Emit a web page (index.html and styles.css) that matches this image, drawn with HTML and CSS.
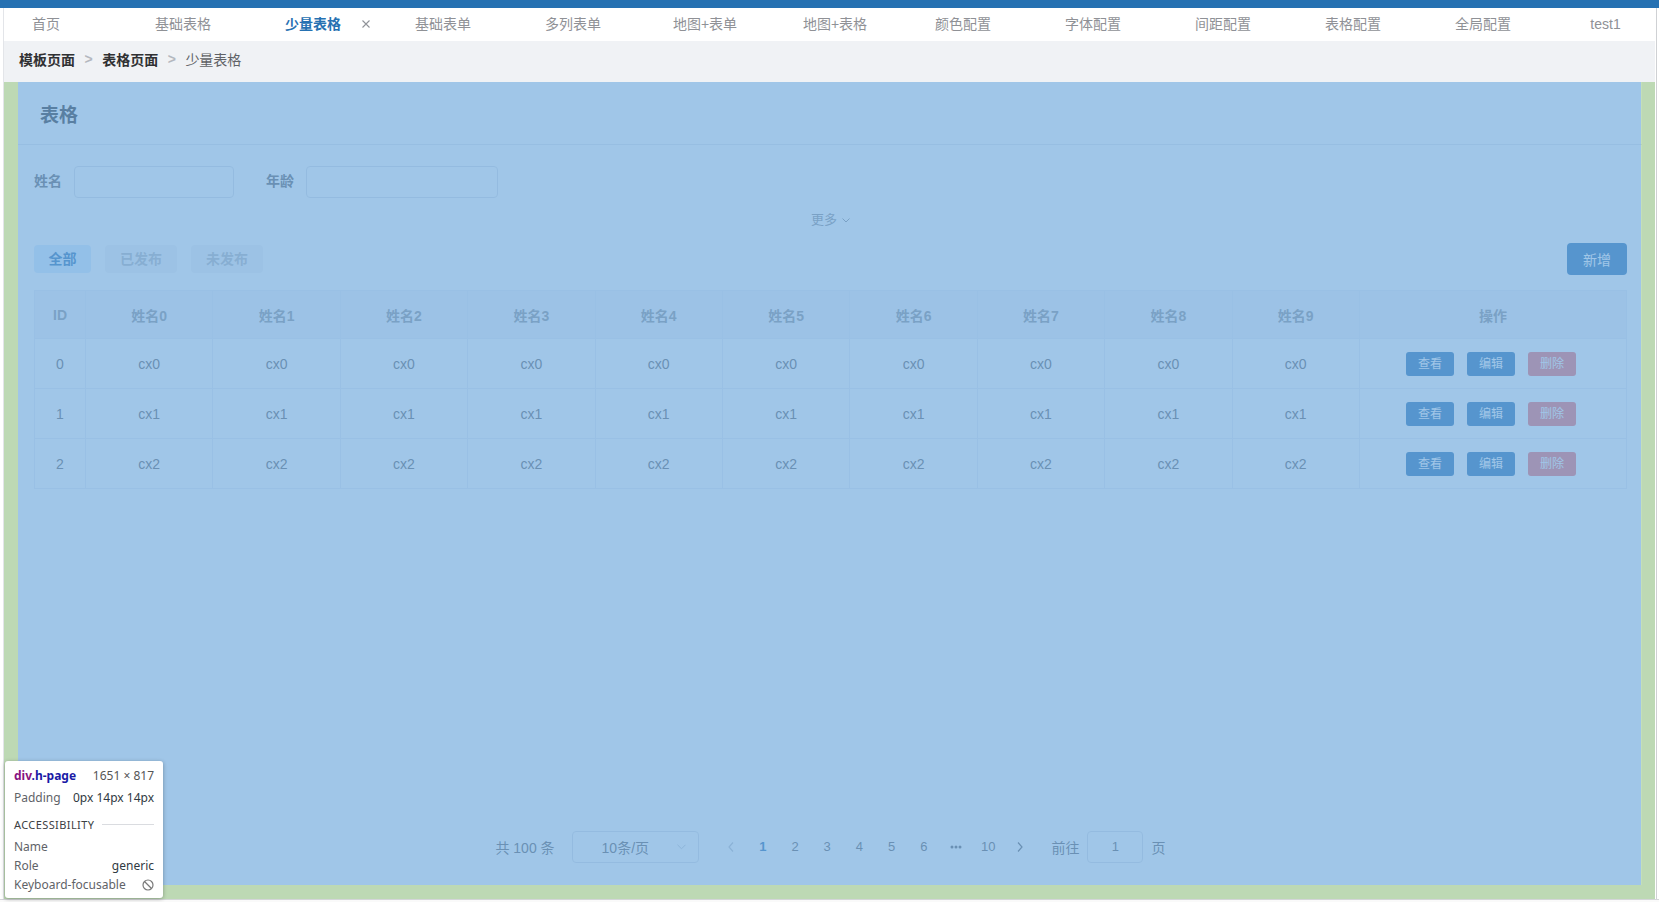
FILE: index.html
```html
<!DOCTYPE html>
<html lang="zh-CN">
<head>
<meta charset="utf-8">
<title>少量表格</title>
<link rel="stylesheet" href="styles.css">
</head>
<body>
<div class="topbar"></div>
<div class="app">
  <div class="gutter-left"></div>
  <div class="main">
    <nav class="tabs">
      <div class="tab tab-first">首页</div>
      <div class="tab">基础表格</div>
      <div class="tab tab-active"><span class="tab-label">少量表格<svg class="tab-close" viewBox="0 0 8 8"><path d="M0.5 0.5L7.5 7.5M7.5 0.5L0.5 7.5" stroke="#909399" stroke-width="1.1" fill="none"/></svg></span></div>
      <div class="tab">基础表单</div>
      <div class="tab">多列表单</div>
      <div class="tab tab-nudge">地图+表单</div>
      <div class="tab tab-nudge">地图+表格</div>
      <div class="tab">颜色配置</div>
      <div class="tab">字体配置</div>
      <div class="tab">间距配置</div>
      <div class="tab">表格配置</div>
      <div class="tab">全局配置</div>
      <div class="tab tab-last">test1</div>
    </nav>
    <div class="breadcrumb">
      <span class="crumb crumb-strong">模板页面</span><span class="sep">&gt;</span><span class="crumb crumb-strong">表格页面</span><span class="sep">&gt;</span><span class="crumb">少量表格</span>
    </div>
    <div class="h-page">
      <section class="card">
        <header class="card-header"><h2 class="card-title">表格</h2></header>
        <div class="card-body">
          <form class="filters">
            <label class="field-label">姓名</label>
            <span class="input input-name"></span>
            <label class="field-label field-gap">年龄</label>
            <span class="input input-age"></span>
          </form>
          <div class="more">更多<svg class="more-icon" viewBox="0 0 8 5"><path d="M0.5 0.5L4 4L7.5 0.5" stroke="#909399" stroke-width="1" fill="none"/></svg></div>
          <div class="toolbar">
            <div class="status-tabs">
              <span class="status status-on">全部</span>
              <span class="status">已发布</span>
              <span class="status">未发布</span>
            </div>
            <button class="btn btn-add" type="button">新增</button>
          </div>
          <table class="grid">
            <colgroup>
              <col class="c-id"><col class="c-n"><col class="c-n"><col class="c-n"><col class="c-n"><col class="c-n"><col class="c-n"><col class="c-n"><col class="c-n"><col class="c-n"><col class="c-n"><col class="c-op">
            </colgroup>
            <thead>
              <tr><th>ID</th><th>姓名0</th><th>姓名1</th><th>姓名2</th><th>姓名3</th><th>姓名4</th><th>姓名5</th><th>姓名6</th><th>姓名7</th><th>姓名8</th><th>姓名9</th><th>操作</th></tr>
            </thead>
            <tbody>
              <tr><td>0</td><td>cx0</td><td>cx0</td><td>cx0</td><td>cx0</td><td>cx0</td><td>cx0</td><td>cx0</td><td>cx0</td><td>cx0</td><td>cx0</td><td class="ops"><div class="op-group"><span class="op op-blue">查看</span><span class="op op-blue">编辑</span><span class="op op-red">删除</span></div></td></tr>
              <tr><td>1</td><td>cx1</td><td>cx1</td><td>cx1</td><td>cx1</td><td>cx1</td><td>cx1</td><td>cx1</td><td>cx1</td><td>cx1</td><td>cx1</td><td class="ops"><div class="op-group"><span class="op op-blue">查看</span><span class="op op-blue">编辑</span><span class="op op-red">删除</span></div></td></tr>
              <tr><td>2</td><td>cx2</td><td>cx2</td><td>cx2</td><td>cx2</td><td>cx2</td><td>cx2</td><td>cx2</td><td>cx2</td><td>cx2</td><td>cx2</td><td class="ops"><div class="op-group"><span class="op op-blue">查看</span><span class="op op-blue">编辑</span><span class="op op-red">删除</span></div></td></tr>
            </tbody>
          </table>
          <div class="pager">
            <span class="pager-total">共 100 条</span>
            <span class="pager-size">10条/页<svg class="pager-caret" viewBox="0 0 10 6"><path d="M0.5 0.5L5 5L9.5 0.5" stroke="#c0c4cc" stroke-width="1" fill="none"/></svg></span>
            <span class="pg"><svg class="pg-arrow" viewBox="0 0 6 10"><path d="M5 0.5L1 5L5 9.5" stroke="#c0c4cc" stroke-width="1.2" fill="none"/></svg></span>
            <span class="pg pg-on">1</span>
            <span class="pg">2</span>
            <span class="pg">3</span>
            <span class="pg">4</span>
            <span class="pg">5</span>
            <span class="pg">6</span>
            <span class="pg"><svg class="pg-dots" viewBox="0 0 12 4"><circle cx="2" cy="2" r="1.5" fill="#606266"/><circle cx="6" cy="2" r="1.5" fill="#606266"/><circle cx="10" cy="2" r="1.5" fill="#606266"/></svg></span>
            <span class="pg">10</span>
            <span class="pg"><svg class="pg-arrow" viewBox="0 0 6 10"><path d="M1 0.5L5 5L1 9.5" stroke="#606266" stroke-width="1.2" fill="none"/></svg></span>
            <span class="pager-jump">前往</span>
            <span class="pager-input">1</span>
            <span class="pager-unit">页</span>
          </div>
        </div>
      </section>
      <div class="hl"></div>
      <div class="inspect">
        <div class="ins-row">
          <span class="ins-name"><span class="ins-tag">div</span><span class="ins-cls">.h-page</span></span>
          <span class="ins-dim">1651 × 817</span>
        </div>
        <div class="ins-row ins-row-pad">
          <span class="ins-key">Padding</span>
          <span class="ins-val">0px 14px 14px</span>
        </div>
        <div class="ins-section"><span>ACCESSIBILITY</span><span class="ins-rule"></span></div>
        <div class="ins-row ins-row-tall ins-row-a"><span class="ins-key">Name</span><span class="ins-val"></span></div>
        <div class="ins-row ins-row-tall"><span class="ins-key">Role</span><span class="ins-val">generic</span></div>
        <div class="ins-row ins-row-tall"><span class="ins-key">Keyboard-focusable</span><svg class="ins-no" viewBox="0 0 12 12"><circle cx="6" cy="6" r="5" stroke="#7a7a7a" stroke-width="1.2" fill="none"/><path d="M2.5 2.5L9.5 9.5" stroke="#7a7a7a" stroke-width="1.2"/></svg></div>
      </div>
    </div>
  </div>
  <div class="gutter-right"></div>
</div>
<div class="bottom-strip"></div>
</body>
</html>
```
FILE: styles.css
```css
html, body {
  margin: 0;
  padding: 0;
}
body {
  width: 1659px;
  height: 902px;
  overflow: hidden;
  background: #ffffff;
  font-family: "Liberation Sans", "Noto Sans CJK SC", sans-serif;
  font-size: 14px;
  color: #606266;
}
.topbar {
  height: 8px;
  background: #2671b2;
}
.app {
  display: flex;
  height: 891px;
}
.gutter-left {
  width: 4px;
  flex: 0 0 4px;
}
.gutter-right {
  width: 4px;
  flex: 0 0 4px;
  box-shadow: inset -2px 0 0 #ffffff, inset -3px 0 0 #cfd1d4;
}
.main {
  width: 1651px;
  flex: 0 0 1651px;
  display: flex;
  flex-direction: column;
  box-shadow: -1px 0 0 #e3e5e9;
}
.bottom-strip {
  height: 4px;
  box-sizing: border-box;
  border-top: 1px solid #d4d6d9;
  background: #fafafa;
}

/* tabs */
.tabs {
  height: 33px;
  display: flex;
  background: #ffffff;
  overflow: hidden;
  white-space: nowrap;
  font-size: 14px;
  line-height: 33px;
  color: #8f9196;
}
.tab {
  flex: 0 0 130px;
  text-align: center;
  box-sizing: border-box;
}
.tab-nudge {
  padding-left: 4px;
}
.tab-first {
  flex-basis: 114px;
  text-align: left;
  padding-left: 28px;
}
.tab-last {
  flex-basis: 107px;
  padding-left: 8px;
}
.tab-active {
  color: #2671b2;
  font-weight: bold;
}
.tab-label {
  position: relative;
}
.tab-close {
  position: absolute;
  left: calc(100% + 21px);
  top: 50%;
  margin-top: -4px;
  width: 8px;
  height: 8px;
}

/* breadcrumb */
.breadcrumb {
  height: 41px;
  box-sizing: border-box;
  padding: 0 0 6px 15px;
  background: #f0f2f5;
  display: flex;
  align-items: center;
  font-size: 14px;
}
.crumb {
  color: #606266;
}
.crumb-strong {
  color: #303133;
  font-weight: bold;
}
.sep {
  margin: 0 9.5px;
  color: #b4b8bf;
  font-weight: bold;
}

/* page */
.h-page {
  position: relative;
  height: 817px;
  box-sizing: border-box;
  padding: 0 14px 14px;
  background: #f0f2f5;
  display: flex;
}
.card {
  flex: 1;
  background: #ffffff;
  display: flex;
  flex-direction: column;
}
.card-header {
  height: 63px;
  box-sizing: border-box;
  border-bottom: 1px solid #e4e7ed;
  padding: 6px 0 0 22px;
  display: flex;
  align-items: center;
}
.card-title {
  margin: 0;
  font-size: 19px;
  font-weight: bold;
  color: #303133;
  line-height: 24px;
}
.card-body {
  flex: 1;
  display: flex;
  flex-direction: column;
  padding: 21px 15px 22px 16px;
}
.filters {
  display: flex;
  align-items: center;
  height: 32px;
  margin: 0;
}
.field-label {
  font-size: 14px;
  font-weight: bold;
  color: #606266;
  margin-right: 12px;
  line-height: 20px;
  margin-bottom: 2px;
}
.field-gap {
  margin-left: 32px;
}
.input {
  display: block;
  height: 32px;
  box-sizing: border-box;
  border: 1px solid #dcdfe6;
  border-radius: 4px;
  background: #ffffff;
}
.input-name {
  width: 160px;
}
.input-age {
  width: 192px;
}
.more {
  margin-top: 14px;
  height: 16px;
  line-height: 16px;
  display: flex;
  justify-content: center;
  align-items: center;
  font-size: 13px;
  color: #909399;
}
.more-icon {
  width: 8px;
  height: 5px;
  margin-left: 5px;
}
.toolbar {
  margin-top: 15px;
  height: 32px;
  display: flex;
  align-items: center;
  justify-content: space-between;
}
.status-tabs {
  display: flex;
  gap: 14px;
}
.status {
  height: 28px;
  line-height: 28px;
  width: 72px;
  text-align: center;
  border-radius: 4px;
  background: #f4f4f5;
  color: #b6b9bf;
  font-weight: bold;
  font-size: 14px;
}
.status-on {
  width: 57px;
  background: #d9ecff;
  color: #2671b2;
}
.btn {
  border: 0;
  margin: 0;
  font-family: inherit;
}
.btn-add {
  width: 60px;
  height: 32px;
  border-radius: 4px;
  background: #2671b2;
  color: #ffffff;
  font-size: 14px;
  padding: 0;
}

/* table */
.grid {
  margin-top: 15px;
  width: 1592px;
  table-layout: fixed;
  border-collapse: collapse;
  border: 1px solid #ebeef5;
  font-size: 14px;
}
.c-id { width: 51px; }
.c-n { width: 127.4px; }
.c-op { width: 267px; }
.grid th,
.grid td {
  border: 1px solid #ebeef5;
  text-align: center;
  padding: 0;
}
.grid th {
  height: 47px;
  background: #f2f4f8;
  color: #909399;
  font-weight: bold;
}
.grid td {
  height: 49px;
  color: #606266;
}
.op-group {
  display: flex;
  justify-content: center;
  gap: 13px;
  padding-right: 4px;
}
.op {
  width: 48px;
  height: 24px;
  line-height: 24px;
  border-radius: 3px;
  font-size: 12px;
  color: #ffffff;
  text-align: center;
}
.op-blue {
  background: #2671b2;
}
.op-red {
  background: #f56c6c;
}

/* pagination */
.pager {
  margin-top: auto;
  height: 32px;
  display: flex;
  align-items: center;
  justify-content: center;
  font-size: 13px;
  color: #606266;
}
.pager-total {
  font-size: 14px;
  margin-right: 17px;
}
.pager-size {
  width: 127px;
  height: 32px;
  box-sizing: border-box;
  border: 1px solid #dcdfe6;
  border-radius: 4px;
  display: flex;
  align-items: center;
  padding: 0 12px 0 29px;
  justify-content: space-between;
  margin-right: 16px;
  font-size: 14px;
}
.pager-caret {
  width: 9px;
  height: 6px;
}
.pg {
  width: 32.2px;
  height: 32px;
  line-height: 32px;
  text-align: center;
  display: flex;
  align-items: center;
  justify-content: center;
}
.pg-on {
  color: #2671b2;
  font-weight: bold;
}
.pg-arrow {
  width: 6px;
  height: 10px;
}
.pg-dots {
  width: 12px;
  height: 4px;
}
.pager-jump {
  margin-left: 15px;
  font-size: 14px;
}
.pager-unit {
  font-size: 14px;
}
.pager-input {
  width: 56px;
  height: 32px;
  line-height: 30px;
  box-sizing: border-box;
  border: 1px solid #dcdfe6;
  border-radius: 4px;
  text-align: center;
  margin: 0 8px;
}

/* devtools highlight */
.hl {
  position: absolute;
  left: 0;
  top: 0;
  right: 0;
  bottom: 0;
  box-sizing: border-box;
  border-style: solid;
  border-color: rgba(147, 196, 125, 0.55);
  border-width: 0 14px 14px 14px;
  background: rgba(111, 168, 220, 0.66);
  background-clip: padding-box;
  pointer-events: none;
}
.inspect {
  position: absolute;
  left: 1px;
  top: 679px;
  width: 158px;
  height: 137px;
  box-sizing: border-box;
  padding: 6px 9px 3px 9px;
  background: #ffffff;
  border-radius: 3px;
  box-shadow: 0 1px 4px rgba(0, 0, 0, 0.3);
  font-family: "Noto Sans", "Open Sans", sans-serif;
  font-size: 12px;
  color: #3c4043;
}
.ins-row {
  display: flex;
  justify-content: space-between;
  align-items: center;
  height: 18px;
  line-height: 18px;
  white-space: nowrap;
}
.ins-row-tall {
  height: 19px;
  line-height: 19px;
}
.ins-row-pad {
  margin-top: 4px;
}
.ins-row-a {
  margin-top: 4px;
}
.ins-name {
  font-weight: bold;
}
.ins-tag {
  color: #881280;
}
.ins-cls {
  color: #1a1aa6;
}
.ins-dim {
  color: #555555;
}
.ins-key {
  color: #5f6368;
}
.ins-val {
  color: #303942;
}
.ins-section {
  margin-top: 8px;
  height: 18px;
  display: flex;
  align-items: center;
  font-size: 11px;
  letter-spacing: 0.4px;
  color: #3c4043;
}
.ins-rule {
  flex: 1;
  height: 1px;
  background: #dadce0;
  margin-left: 8px;
}
.ins-no {
  width: 12px;
  height: 12px;
}
```
